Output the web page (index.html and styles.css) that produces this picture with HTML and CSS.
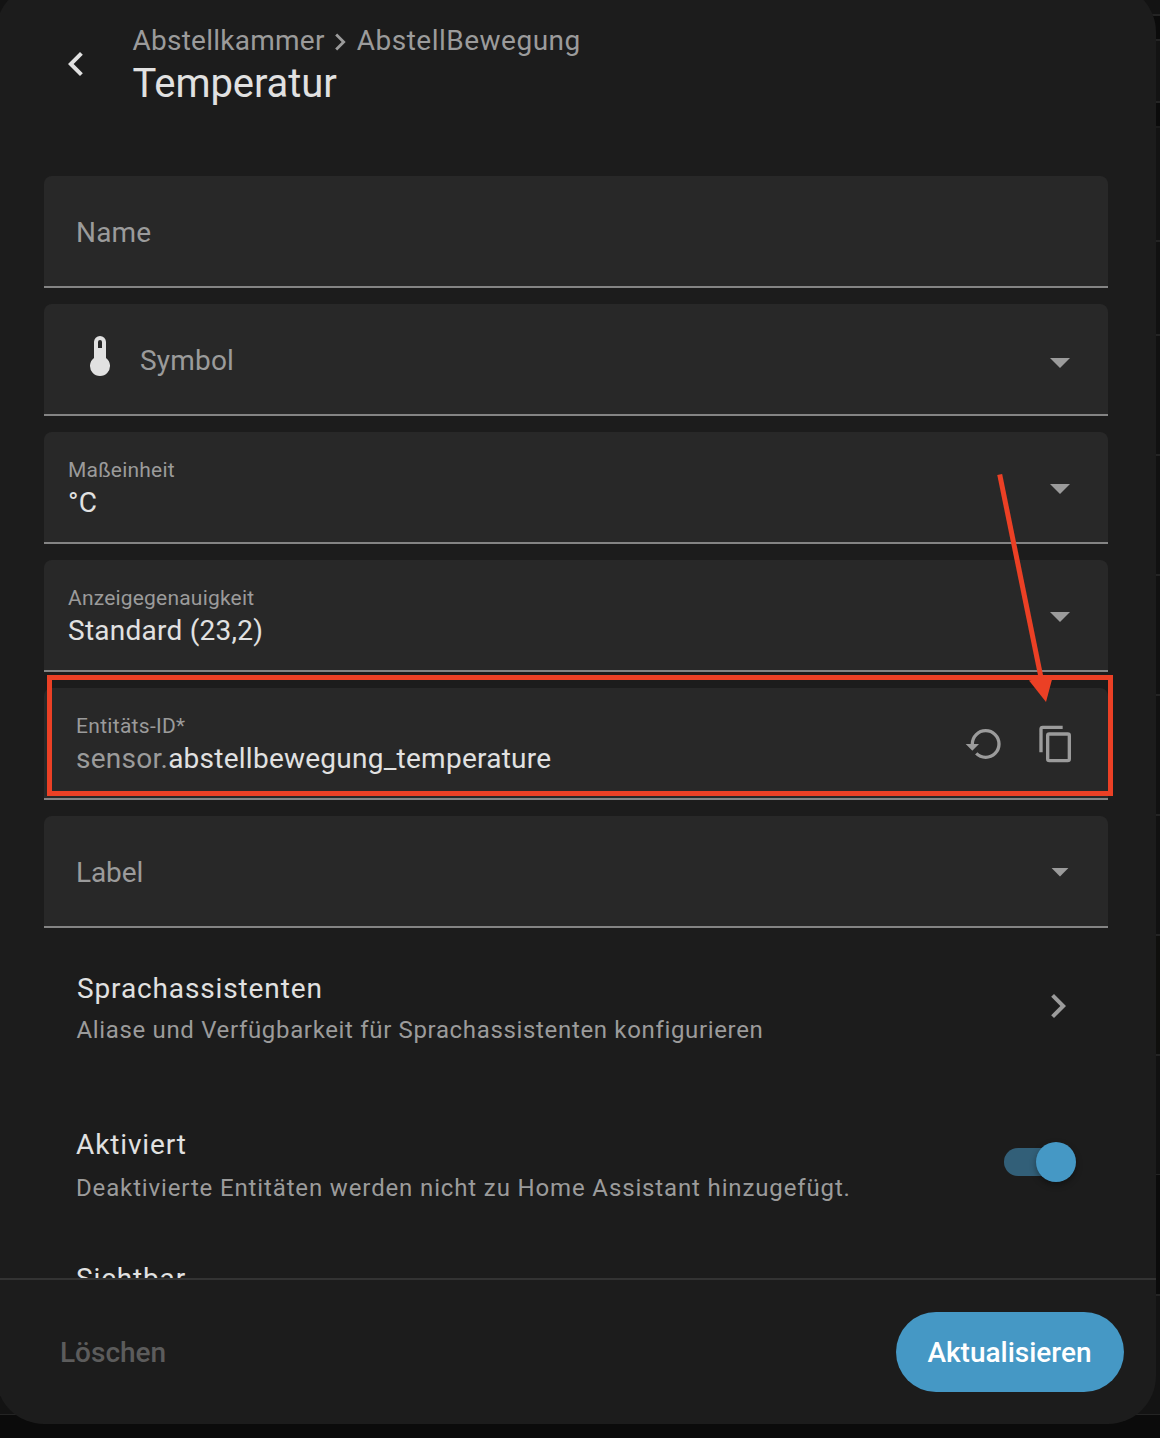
FILE: index.html
```html
<!DOCTYPE html>
<html lang="de">
<head>
<meta charset="utf-8">
<title>Temperatur</title>
<link rel="stylesheet" href="styles.css">
</head>
<body>
<main class="dialog">
  <header class="header">
    <svg class="icon back" viewBox="0 0 24 24"><path d="M15.41,16.58L10.83,12L15.41,7.41L14,6L8,12L14,18L15.41,16.58Z"/></svg>
    <div class="titles">
      <div class="breadcrumb"><span>Abstellkammer</span><svg class="crumb-icon" viewBox="0 0 24 24"><path d="M8.59,16.58L13.17,12L8.59,7.41L10,6L16,12L10,18L8.59,16.58Z"/></svg><span class="crumb-device">AbstellBewegung</span></div>
      <h1 class="title">Temperatur</h1>
    </div>
  </header>

  <section class="content">
    <div class="field"><span class="placeholder">Name</span></div>
    <div class="field">
      <svg class="icon thermo" viewBox="0 0 24 24"><path d="M15 13V5A3 3 0 0 0 9 5V13A5 5 0 1 0 15 13M12 4A1 1 0 0 1 13 5V8H11V5A1 1 0 0 1 12 4Z"/></svg>
      <span class="placeholder">Symbol</span>
      <svg class="icon caret caret-low" viewBox="0 0 24 24"><path d="M7,10L12,15L17,10H7Z"/></svg>
    </div>
    <div class="field select">
      <div class="stack"><span class="label">Maßeinheit</span><span class="value">°C</span></div>
      <svg class="icon caret" viewBox="0 0 24 24"><path d="M7,10L12,15L17,10H7Z"/></svg>
    </div>
    <div class="field select">
      <div class="stack"><span class="label">Anzeigegenauigkeit</span><span class="value">Standard (23,2)</span></div>
      <svg class="icon caret" viewBox="0 0 24 24"><path d="M7,10L12,15L17,10H7Z"/></svg>
    </div>
    <div class="field entity">
      <div class="stack"><span class="label">Entitäts-ID*</span><span class="value"><span class="prefix">sensor.</span>abstellbewegung_temperature</span></div>
      <div class="actions">
        <svg class="action" viewBox="0 0 24 24"><path d="M13,3A9,9 0 0,0 4,12H1L4.89,15.89L4.96,16.03L9,12H6A7,7 0 0,1 13,5A7,7 0 0,1 20,12A7,7 0 0,1 13,19C11.07,19 9.32,18.21 8.06,16.94L6.64,18.36C8.27,20 10.5,21 13,21A9,9 0 0,0 22,12A9,9 0 0,0 13,3Z"/></svg>
        <svg class="action" viewBox="0 0 24 24"><path d="M19,21H8V7H19M19,5H8A2,2 0 0,0 6,7V21A2,2 0 0,0 8,23H19A2,2 0 0,0 21,21V7A2,2 0 0,0 19,5M16,1H4A2,2 0 0,0 2,3V17H4V3H16V1Z"/></svg>
      </div>
    </div>
    <div class="field">
      <span class="placeholder tight">Label</span>
      <svg class="icon caret caret-small" viewBox="0 0 24 24"><path d="M7.8,10L12,14.2L16.2,10H7.8Z"/></svg>
    </div>

    <div class="row row-voice">
      <div class="stack"><span class="primary">Sprachassistenten</span><span class="secondary">Aliase und Verfügbarkeit für Sprachassistenten konfigurieren</span></div>
      <svg class="icon chevron" viewBox="0 0 24 24"><path d="M8.59,16.58L13.17,12L8.59,7.41L10,6L16,12L10,18L8.59,16.58Z"/></svg>
    </div>
    <div class="row row-enabled">
      <div class="stack"><span class="primary">Aktiviert</span><span class="secondary">Deaktivierte Entitäten werden nicht zu Home Assistant hinzugefügt.</span></div>
      <div class="switch"><div class="thumb"></div></div>
    </div>
    <div class="row row-visible"><span class="primary">Sichtbar</span></div>
  </section>

  <footer class="footer">
    <button class="delete">Löschen</button>
    <button class="update">Aktualisieren</button>
  </footer>
</main>
<svg class="annotation" viewBox="0 0 1160 1438">
  <rect x="49.5" y="677.5" width="1061" height="116"/>
  <path class="shaft" d="M999.7 474.5L1041.3 679"/>
  <path class="head" d="M1046 702L1029 680.6L1053 675.8Z"/>
</svg>
</body>
</html>
```

FILE: styles.css
```css
* { box-sizing: border-box; }

body {
  margin: 0;
  height: 1438px;
  overflow: hidden;
  font-family: Roboto, sans-serif;
  font-size: 28px;
  color: #e1e1e1;
  background: linear-gradient(
    #131313 14px, #242424 14px 16px, #0b0b0b 16px 39px, #242424 39px 41px,
    #131313 41px 101px, #242424 101px 103px, #0b0b0b 103px 126px, #1c1c1c 126px 128px,
    #131313 128px 240px, #242424 240px 242px, #111 242px 334px, #242424 334px 336px,
    #111 336px 454px, #242424 454px 456px, #111 456px 574px, #242424 574px 576px,
    #111 576px 694px, #242424 694px 696px, #111 696px 814px, #242424 814px 816px,
    #111 816px 934px, #242424 934px 936px, #0f0f0d 936px 1054px, #242424 1054px 1056px,
    #111 1056px 1174px, #242424 1174px 1175px, #0b0b0b 1175px 1294px, #242424 1294px 1296px,
    #131313 1296px 1414px, #242424 1414px 1415px, #0b0b0b 1415px);
}

.dialog {
  width: 1160px;
  height: 1440px;
  margin: -16px 0 0 -4px;
  background: #1c1c1c;
  border-radius: 48px;
  display: flex;
  flex-direction: column;
  overflow: hidden;
}

.icon { width: 48px; height: 48px; flex: none; fill: currentColor; }

.header { height: 192px; flex: none; display: flex; padding: 36px 56px 0; }
.back { margin-top: 20px; }
.titles { margin-left: 32.5px; }
.breadcrumb { display: flex; align-items: center; height: 40px; color: #9b9b9b; letter-spacing: 0.25px; }
.crumb-icon { width: 34px; height: 34px; margin: 3px -0.5px 0 -1.5px; fill: currentColor; }
.crumb-device { letter-spacing: 0.5px; }
.title { margin: 0; font-size: 40px; font-weight: 400; line-height: 48px; letter-spacing: -0.1px; }

.content { flex: 1; min-height: 0; padding: 0 48px; overflow: hidden; }

.field {
  height: 112px;
  margin-bottom: 16px;
  padding: 0 24px 0 32px;
  display: flex;
  align-items: center;
  background: #282828;
  border-bottom: 2px solid #848484;
  border-radius: 8px 8px 0 0;
}
.select { padding-left: 24px; }
.placeholder { color: #9b9b9b; line-height: 32px; letter-spacing: 0.2px; padding-top: 4px; }
.tight { letter-spacing: -0.1px; }
.thermo { margin: -6px 16px 0 0; }
.caret { margin: 2px 0 0 auto; color: #9b9b9b; }
.caret-low { margin-top: 6px; }
.caret-small { margin-top: 2px; }
.stack { display: flex; flex-direction: column; }
.label { font-size: 21px; line-height: 28px; color: #9b9b9b; letter-spacing: 0.2px; padding: 2px 0; }
.entity .label { letter-spacing: 0.3px; }
.value { line-height: 34px; letter-spacing: 0.25px; }
.prefix { color: #9b9b9b; }
.actions { display: flex; gap: 32px; margin: 2px 0 0 auto; padding-right: 8px; color: #9b9b9b; }
.action { width: 40px; height: 40px; fill: currentColor; }

.row { display: flex; padding: 0 32px; }
.primary { line-height: 32px; letter-spacing: 0.87px; }
.secondary { font-size: 24px; line-height: 32px; color: #9b9b9b; letter-spacing: 0.66px; }
.row-voice { height: 156px; padding: 29px 26px 0 32.5px; }
.row-voice .primary { padding-left: 0.5px; }
.row-voice .secondary { margin-top: 9px; }
.chevron { margin: 9px 0 0 auto; color: #9b9b9b; }
.row-enabled { height: 134px; padding-top: 29px; }
.row-enabled .secondary { margin-top: 11px; letter-spacing: 0.86px; }
.row-visible { padding-top: 29px; }
.switch { width: 72px; height: 28px; margin: 19px 0 0 auto; display: flex; align-items: center; justify-content: flex-end; border-radius: 14px; background: linear-gradient(90deg, #325f78 60px, transparent 60px); }
.thumb { width: 40px; height: 40px; flex: none; border-radius: 50%; background: #4598c5; box-shadow: 0 3px 6px rgba(0, 0, 0, 0.35); }

.footer {
  height: 146px;
  flex: none;
  display: flex;
  align-items: center;
  justify-content: space-between;
  padding: 0 32px;
  border-top: 2px solid #333;
}
.footer button { height: 80px; border: 0; border-radius: 40px; padding: 0 32px; font: 500 28px Roboto, sans-serif; }
.footer .delete { background: none; color: #5c5c5c; }
.footer .update { width: 228px; padding: 0 1px 0 0; background: #4598c5; color: #fff; }

.annotation { position: absolute; left: 0; top: 0; width: 1160px; height: 1438px; pointer-events: none; }
.annotation rect, .annotation .shaft { fill: none; stroke: #eb4025; stroke-width: 5; }
.annotation .head { fill: #eb4025; }
```
